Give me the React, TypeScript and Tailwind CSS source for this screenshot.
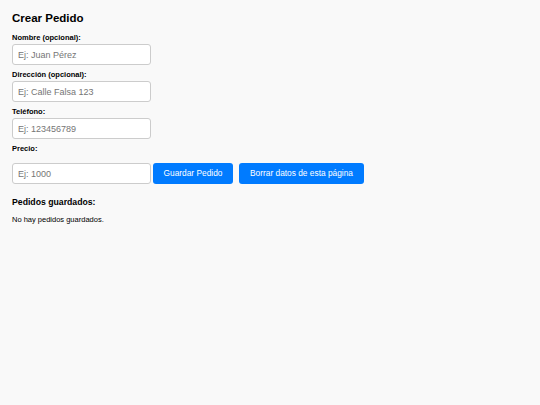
import React from 'react';

const Field = ({ label, placeholder }: { label: string; placeholder: string }) => (
  <div className="flex flex-col">
    <label className="text-[7.5px] leading-[10px] font-bold text-black mb-px">{label}</label>
    <input
      placeholder={placeholder}
      className="w-[139px] h-[21px] px-[5px] text-[9px] bg-white border border-[#cccccc] rounded-[3px] placeholder:text-[#757575] outline-none"
    />
  </div>
);

export default function App() {
  return (
    <div className="min-h-[405px] bg-[#f9f9f9] px-3 pt-[11px] text-black font-['Liberation_Sans',Arial,sans-serif]">
      <h2 className="text-[11.5px] leading-[15px] font-bold mb-[7px]">Crear Pedido</h2>
      <div className="flex flex-col gap-[5px]">
        <Field label="Nombre (opcional):" placeholder="Ej: Juan Pérez" />
        <Field label="Dirección (opcional):" placeholder="Ej: Calle Falsa 123" />
        <Field label="Teléfono:" placeholder="Ej: 123456789" />
        <div className="flex flex-col">
          <label className="text-[7.5px] leading-[10px] font-bold mb-[9px]">Precio:</label>
          <div className="flex items-center">
            <input
              placeholder="Ej: 1000"
              className="w-[139px] h-[21px] px-[5px] text-[9px] bg-white border border-[#cccccc] rounded-[3px] placeholder:text-[#757575] outline-none"
            />
            <button className="ml-[2px] h-[21px] w-[80px] bg-[#007bff] text-white text-[8.35px] rounded-[3px]">
              Guardar Pedido
            </button>
            <button className="ml-[6px] h-[21px] w-[125px] bg-[#007bff] text-white text-[8.35px] rounded-[3px]">
              Borrar datos de esta página
            </button>
          </div>
        </div>
      </div>
      <h3 className="mt-[12px] text-[8.7px] leading-[12px] font-bold">Pedidos guardados:</h3>
      <p className="mt-[7px] text-[7.5px] leading-[10px]">No hay pedidos guardados.</p>
    </div>
  );
}
